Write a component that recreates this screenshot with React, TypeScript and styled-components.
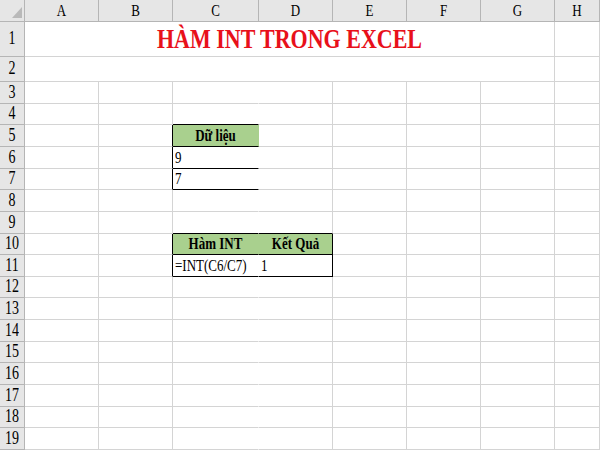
import styled, { createGlobalStyle } from "styled-components";

const GlobalStyle = createGlobalStyle`
    html, body {
        margin: 0;
        padding: 0;
        background: #ffffff;
        overflow: hidden;
    }
`;

const GRID = "#d4d4d4";
const HEAD_LINE = "#b5b5b5";
const GREEN = "#a9d08e";

const COLS = [25, 74, 74, 86, 74, 74, 74, 74, 45];
const LETTERS = ["A", "B", "C", "D", "E", "F", "G", "H"];

// rows 3..19 share 368px between them
const bodyRows = Array.from({ length: 17 }, (_, i) =>
    Math.round(82 + ((i + 1) * 368) / 17) - Math.round(82 + (i * 368) / 17)
);
const ROWS = [22, 35, 25, ...bodyRows];

const Sheet = styled.div`
    display: grid;
    grid-template-columns: ${COLS.map((c) => `${c}px`).join(" ")};
    grid-template-rows: ${ROWS.map((r) => `${r}px`).join(" ")};
    width: 600px;
    height: 450px;
    font-family: "Liberation Serif", "Times New Roman", serif;
    color: #000;
`;

const Head = styled.div`
    box-sizing: border-box;
    display: flex;
    align-items: center;
    justify-content: center;
    background: #e6e6e6;
    border-right: 1px solid ${HEAD_LINE};
    border-bottom: 1px solid ${HEAD_LINE};
    font-size: 13px;
    overflow: hidden;
`;

const Corner = styled(Head)`
    align-items: flex-end;
    justify-content: flex-end;
    padding: 0 2px 3px 0;
`;

const Cell = styled.div<{
    $right?: string;
    $bottom?: string;
    $bg?: string;
    $align?: string;
    $span?: number;
}>`
    box-sizing: border-box;
    display: flex;
    align-items: center;
    justify-content: ${(p) => p.$align || "flex-start"};
    padding: 0 2px;
    grid-column: span ${(p) => p.$span || 1};
    background: ${(p) => p.$bg || "#ffffff"};
    border-right: 1px solid ${(p) => p.$right || GRID};
    border-bottom: 1px solid ${(p) => p.$bottom || GRID};
    font-size: 13px;
    white-space: nowrap;
    overflow: hidden;
`;

const Glyphs = styled.span<{ $bold?: boolean; $sy?: number }>`
    display: inline-block;
    font-weight: ${(p) => (p.$bold ? 700 : 400)};
    transform: scaleY(${(p) => p.$sy || 1.35});
`;

const RowNum = styled(Glyphs)`
    font-size: 14px;
`;

const Title = styled(Glyphs)`
    color: #e8101a;
    font-size: 22px;
    font-weight: 700;
`;

type CellSpec = {
    text?: string;
    bold?: boolean;
    align?: string;
    bg?: string;
    right?: string;
    bottom?: string;
};

// cell decorations, keyed "C5" etc.
const cells: Record<string, CellSpec> = {
    C4: { bottom: "#000" },
    B5: { right: "#000" },
    B6: { right: "#000" },
    B7: { right: "#000" },
    C5: { text: "Dữ liệu", bold: true, align: "center", bg: GREEN, bottom: "#000" },
    C6: { text: "9", bottom: "#000" },
    C7: { text: "7", bottom: "#000" },
    C9: { bottom: "#000" },
    D9: { bottom: "#000" },
    B10: { right: "#000" },
    B11: { right: "#000" },
    C10: { text: "Hàm INT", bold: true, align: "center", bg: GREEN, bottom: "#000" },
    D10: { text: "Kết Quả", bold: true, align: "center", bg: GREEN, bottom: "#000", right: "#000" },
    C11: { text: "=INT(C6/C7)", bottom: "#000" },
    D11: { text: "1", bottom: "#000", right: "#000", align: "flex-start" },
};

function CornerMark() {
    return (
        <svg width="10" height="11" viewBox="0 0 10 11">
            <polygon points="10,0 10,11 0,11" fill="#b9b9b9" />
        </svg>
    );
}

function App() {
    const rows = ROWS.slice(1).map((_, i) => i + 1);
    return (
        <>
            <GlobalStyle />
            <Sheet>
                <Corner>
                    <CornerMark />
                </Corner>
                {LETTERS.map((l) => (
                    <Head key={l}>
                        <Glyphs>{l}</Glyphs>
                    </Head>
                ))}
                {rows.map((r) => (
                    <RowCells key={r} row={r} />
                ))}
            </Sheet>
        </>
    );
}

function RowCells({ row }: { row: number }) {
    const label = (
        <Head>
            <RowNum $sy={1.3}>{row}</RowNum>
        </Head>
    );
    if (row <= 2) {
        return (
            <>
                {label}
                <Cell $span={7} $align="center">
                    {row === 1 && <Title $sy={1.25}>HÀM INT TRONG EXCEL</Title>}
                </Cell>
                <Cell />
            </>
        );
    }
    return (
        <>
            {label}
            {LETTERS.map((l) => {
                const spec = cells[`${l}${row}`] || {};
                // column C has no visible right gridline in the sheet
                const right = spec.right || (l === "C" ? spec.bg || "#ffffff" : undefined);
                return (
                    <Cell
                        key={l}
                        $right={right}
                        $bottom={spec.bottom}
                        $bg={spec.bg}
                        $align={spec.align}
                    >
                        {spec.text && <Glyphs $bold={spec.bold}>{spec.text}</Glyphs>}
                    </Cell>
                );
            })}
        </>
    );
}

export default App;
